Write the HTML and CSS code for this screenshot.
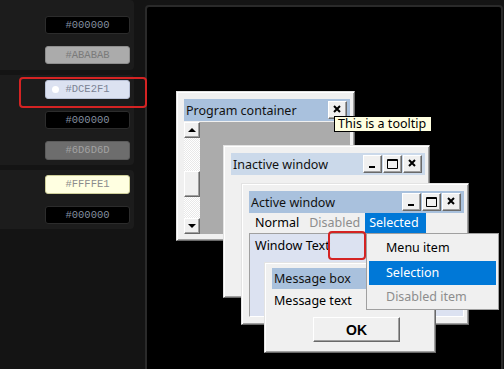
FILE: index.html
```html
<!DOCTYPE html>
<html lang="en">
<head>
    <title>Theme preview</title>
    <link rel="stylesheet" href="styles.css">
</head>
<body>

    <aside class="sidebar">
      <section class="card card-first">
        <div class="swatch swatch-dark">#000000</div>
        <div class="swatch swatch-grey">#ABABAB</div>
      </section>
      <section class="card">
        <div class="swatch swatch-blue"><span class="swatch-dot"></span>#DCE2F1</div>
        <div class="swatch swatch-dark">#000000</div>
        <div class="swatch swatch-mid">#6D6D6D</div>
      </section>
      <section class="card">
        <div class="swatch swatch-yellow">#FFFFE1</div>
        <div class="swatch swatch-dark">#000000</div>
      </section>
    </aside>

    <div class="mark mark-swatch"></div>

    <main class="preview">

      <div class="window program-window">
        <div class="title-bar">
          <span>Program container</span>
          <div class="title-buttons">
            <button class="title-button">
              <svg width="17" height="16" viewBox="0 0 17 16"><path d="M5 4 L11 10 M11 4 L5 10" stroke="#000" stroke-width="2"/></svg>
            </button>
          </div>
        </div>
        <div class="program-body">
          <div class="scrollbar">
            <div class="scroll-button"><span class="arrow-up"></span></div>
            <div class="scroll-track track-top"></div>
            <div class="scroll-thumb"></div>
            <div class="scroll-track"></div>
            <div class="scroll-button"><span class="arrow-down"></span></div>
          </div>
          <div class="program-area"></div>
        </div>
      </div>

      <div class="tooltip">This is a tooltip</div>

      <div class="window inactive-window">
        <div class="title-bar title-inactive">
          <span>Inactive window</span>
          <div class="title-buttons">
            <button class="title-button">
              <svg width="17" height="16" viewBox="0 0 17 16"><rect x="5" y="10" width="6" height="2" fill="#000"/></svg>
            </button>
            <button class="title-button">
              <svg width="17" height="16" viewBox="0 0 17 16"><path d="M3.5 3.5 H13.5 V12.5 H3.5 Z M3.5 4.5 H13.5" stroke="#000" stroke-width="1" fill="none"/></svg>
            </button>
            <button class="title-button">
              <svg width="17" height="16" viewBox="0 0 17 16"><path d="M5 4 L11 10 M11 4 L5 10" stroke="#000" stroke-width="2"/></svg>
            </button>
          </div>
        </div>
      </div>

      <div class="window active-window">
        <div class="title-bar">
          <span>Active window</span>
          <div class="title-buttons">
            <button class="title-button">
              <svg width="17" height="16" viewBox="0 0 17 16"><rect x="5" y="10" width="6" height="2" fill="#000"/></svg>
            </button>
            <button class="title-button">
              <svg width="17" height="16" viewBox="0 0 17 16"><path d="M3.5 3.5 H13.5 V12.5 H3.5 Z M3.5 4.5 H13.5" stroke="#000" stroke-width="1" fill="none"/></svg>
            </button>
            <button class="title-button">
              <svg width="17" height="16" viewBox="0 0 17 16"><path d="M5 4 L11 10 M11 4 L5 10" stroke="#000" stroke-width="2"/></svg>
            </button>
          </div>
        </div>
        <div class="menu-bar">
          <span class="menu-item">Normal</span>
          <span class="menu-item menu-disabled">Disabled</span>
          <span class="menu-item menu-selected">Selected</span>
        </div>
        <div class="client-area">Window Text</div>
      </div>

      <div class="window message-box">
        <div class="title-bar">
          <span>Message box</span>
        </div>
        <p class="message-text">Message text</p>
        <div class="message-actions">
          <button class="ok-button">OK</button>
        </div>
      </div>

      <div class="popup-menu">
        <div class="popup-item">Menu item</div>
        <div class="popup-item popup-selected">Selection</div>
        <div class="popup-item popup-disabled">Disabled item</div>
      </div>

      <div class="mark mark-text"></div>

    </main>

</body>
</html>
```

FILE: styles.css
```css
body {
  margin: 0;
  width: 504px;
  height: 369px;
  overflow: hidden;
  background-color: #141414;
  font-family: "Noto Sans", Arial, sans-serif;
  display: flex;
  position: relative;
}

/* Left colour list */
.sidebar {
  width: 145px;
  flex-shrink: 0;
  display: flex;
  flex-direction: column;
}

.card {
  width: 134px;
  box-sizing: border-box;
  background-color: #1c1c1c;
  border-radius: 0 4px 4px 0;
  padding: 5px 4px 5px 0;
  margin-top: 5px;
  display: flex;
  flex-direction: column;
  align-items: flex-end;
  gap: 12px;
}

.card-first {
  margin-top: 0;
  padding-top: 16px;
  padding-bottom: 6px;
}

.swatch {
  position: relative;
  width: 85px;
  height: 18px;
  box-sizing: border-box;
  border: 1px solid #2c2c2c;
  border-radius: 3px;
  font-family: "Liberation Mono", monospace;
  font-size: 10.5px;
  line-height: 16px;
  text-align: center;
}

.swatch-dark {
  background-color: #000000;
  color: #8590a0;
}

.swatch-grey {
  background-color: #ababab;
  border-color: #8e8e8e;
  color: #7a7a7a;
}

.swatch-blue {
  height: 19px;
  background-color: #dce2f1;
  border-color: #b9c1d6;
  color: #7b8394;
}

.swatch-mid {
  height: 19px;
  background-color: #6d6d6d;
  border-color: #5c5c5c;
  color: #a2a2a2;
}

.swatch-yellow {
  height: 19px;
  background-color: #ffffe1;
  border-color: #cfcf9a;
  color: #8c8c8c;
}

.swatch-dot {
  position: absolute;
  left: 6px;
  top: 5px;
  width: 7px;
  height: 7px;
  border-radius: 50%;
  background-color: #ffffff;
}

.mark {
  position: absolute;
  box-sizing: border-box;
  border: 2px solid #d42323;
  border-radius: 4px;
  z-index: 10;
}

.mark-swatch {
  left: 19px;
  top: 77px;
  width: 128px;
  height: 31px;
}

.mark-text {
  left: 181px;
  top: 224px;
  width: 38px;
  height: 29px;
}

/* Preview canvas */
.preview {
  position: relative;
  width: 358px;
  height: 380px;
  box-sizing: border-box;
  margin-top: 5px;
  border: 2px solid #2a2a2a;
  border-radius: 4px;
  background-color: #000000;
  font-size: 12.5px;
  color: #000000;
}

.window {
  position: absolute;
  box-sizing: border-box;
  background-color: #f0f0f0;
  border: 1px solid;
  border-color: #e3e3e3 #696969 #696969 #e3e3e3;
  box-shadow: inset 1px 1px #ffffff, inset -1px -1px #a0a0a0;
  padding: 7px 4px 4px 7px;
  display: flex;
  flex-direction: column;
}

.title-bar {
  height: 22px;
  flex-shrink: 0;
  background-color: #a9c1dd;
  display: flex;
  align-items: center;
  justify-content: space-between;
  padding: 0 3px 0 2px;
  color: #111111;
  font-size: 12.5px;
}

.title-inactive {
  background-color: #cbd9ea;
}

.title-buttons {
  display: flex;
  gap: 1px;
}

.title-button {
  width: 19px;
  height: 18px;
  padding: 0;
  box-sizing: border-box;
  background-color: #f0f0f0;
  border: 1px solid;
  border-color: #ffffff #696969 #696969 #ffffff;
  box-shadow: inset -1px -1px #a0a0a0;
  display: flex;
  align-items: flex-start;
  justify-content: flex-start;
}

.program-window {
  left: 29px;
  top: 84px;
  width: 179px;
  height: 150px;
}

.program-body {
  margin-top: 1px;
  height: 112px;
  display: flex;
}

.scrollbar {
  width: 16px;
  display: flex;
  flex-direction: column;
}

.scroll-button,
.scroll-thumb {
  box-sizing: border-box;
  background-color: #f0f0f0;
  border: 1px solid;
  border-color: #ffffff #696969 #696969 #ffffff;
  box-shadow: inset -1px -1px #a0a0a0;
}

.scroll-button {
  height: 16px;
  display: flex;
  align-items: center;
  justify-content: center;
}

.scroll-thumb {
  height: 26px;
}

.scroll-track {
  flex: 1;
  background-color: #f4f4f4;
  background-image: repeating-conic-gradient(#ffffff 0 25%, #e8e8e8 0 50%);
  background-size: 2px 2px;
}

.track-top {
  flex: none;
  height: 33px;
}

.arrow-up,
.arrow-down {
  width: 0;
  height: 0;
  border-left: 4px solid transparent;
  border-right: 4px solid transparent;
}

.arrow-up {
  border-bottom: 4px solid #000000;
}

.arrow-down {
  border-top: 4px solid #000000;
}

.program-area {
  flex: 1;
  background-color: #ababab;
}

.tooltip {
  position: absolute;
  left: 187px;
  top: 109px;
  width: 98px;
  height: 16px;
  box-sizing: border-box;
  background-color: #ffffe1;
  border: 1px solid #000000;
  padding-left: 3px;
  font-size: 12.5px;
  line-height: 14px;
  white-space: nowrap;
}

.inactive-window {
  left: 76px;
  top: 138px;
  width: 207px;
  height: 153px;
}

.active-window {
  left: 94px;
  top: 176px;
  width: 228px;
  height: 142px;
}

.menu-bar {
  height: 20px;
  display: flex;
  align-items: stretch;
  padding-left: 1px;
}

.menu-item {
  padding: 0 5px;
  line-height: 20px;
}

.menu-disabled {
  color: #8d8d8d;
}

.menu-selected {
  background-color: #0078d7;
  color: #ffffff;
  padding: 0 7px 0 4px;
}

.client-area {
  flex: 1;
  margin-bottom: 3px;
  background-color: #dce2f1;
  border: 1px solid;
  border-color: #a0a0a0 #ffffff #ffffff #a0a0a0;
  padding: 3px 5px;
}

.message-box {
  left: 117px;
  top: 255px;
  width: 172px;
  height: 91px;
  padding-top: 5px;
}

.message-box .title-bar {
  height: 21px;
}

.message-text {
  margin: 0;
  height: 24px;
  line-height: 24px;
  padding-left: 2px;
}

.message-actions {
  display: flex;
  justify-content: center;
  padding-left: 10px;
  padding-top: 4px;
}

.ok-button {
  width: 87px;
  height: 25px;
  box-sizing: border-box;
  background-color: #f0f0f0;
  border: 1px solid;
  border-color: #ffffff #696969 #696969 #ffffff;
  box-shadow: inset -1px -1px #a0a0a0;
  font-family: "Liberation Sans", Arial, sans-serif;
  font-size: 14px;
  font-weight: bold;
  color: #000000;
  padding: 0;
}

.popup-menu {
  position: absolute;
  left: 219px;
  top: 226px;
  width: 133px;
  height: 77px;
  box-sizing: border-box;
  background-color: #f0f0f0;
  border: 1px solid #a0a0a0;
  padding: 2px;
  display: flex;
  flex-direction: column;
}

.popup-item {
  height: 24px;
  line-height: 24px;
  padding-left: 17px;
}

.popup-selected {
  background-color: #0078d7;
  color: #ffffff;
  margin-top: 1px;
}

.popup-disabled {
  color: #8d8d8d;
}
```
